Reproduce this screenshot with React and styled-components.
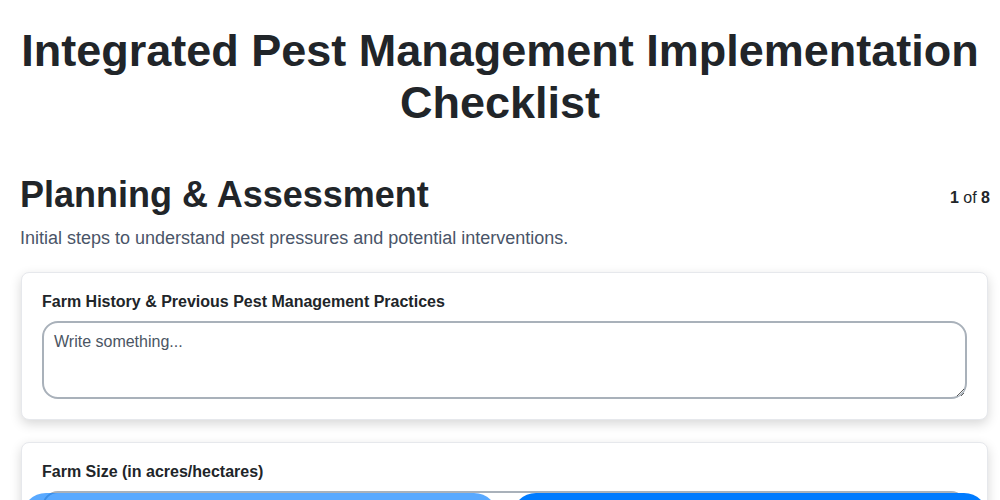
import React from 'react';
import styled, { createGlobalStyle } from 'styled-components';

const GlobalStyle = createGlobalStyle`
  html, body {
    margin: 0;
    padding: 0;
    background: #ffffff;
    font-family: "Liberation Sans", Arial, sans-serif;
    color: #212529;
  }
  * {
    box-sizing: border-box;
  }
`;

const Page = styled.div`
  padding: 0 12px 80px 20px;
`;

const Title = styled.h1`
  margin: 25px -12px 45px -20px;
  font-size: 45px;
  font-weight: 700;
  text-align: center;
  color: #212529;
`;

const SectionHead = styled.div`
  display: flex;
  align-items: center;
  justify-content: space-between;
  margin-right: -2px;
`;

const SectionTitle = styled.h2`
  margin: 0;
  font-size: 36px;
  font-weight: 700;
  color: #212529;
`;

const Counter = styled.div`
  font-size: 16px;
  color: #212529;
  padding-top: 6px;

  b {
    font-weight: 700;
  }
`;

const Description = styled.p`
  margin: 12px 0 23px;
  font-size: 18px;
  color: #4a5568;
`;

const Card = styled.div`
  background: #ffffff;
  border: 1px solid #e6e8ec;
  border-radius: 8px;
  box-shadow: 0 4px 12px rgba(0, 0, 0, 0.16);
  padding: 20px;
  margin: 0 0 22px 1px;
`;

const Label = styled.label`
  display: block;
  font-size: 16px;
  font-weight: 700;
  color: #212529;
  margin-bottom: 10px;
`;

const fieldStyles = `
  display: block;
  width: 100%;
  border: 2px solid #a9b1ba;
  border-radius: 16px;
  padding: 10px;
  font-family: "Liberation Sans", Arial, sans-serif;
  font-size: 16px;
  color: #212529;
  background: #ffffff;
  outline: none;
  &::placeholder {
    color: #4b5563;
  }
`;

const TextArea = styled.textarea`
  ${fieldStyles}
  height: 78px;
`;

const Input = styled.input`
  ${fieldStyles}
  height: 44px;
`;

const Footer = styled.div`
  position: fixed;
  left: 0;
  right: 0;
  bottom: -41px;
  display: flex;
  gap: 14px;
  padding: 0 12px 0 22px;
`;

const NavButton = styled.button`
  flex: 1;
  height: 48px;
  border: none;
  border-radius: 24px;
  background: #007bff;
  opacity: ${props => (props.disabled ? 0.65 : 1)};
  color: #ffffff;
  font-family: "Liberation Sans", Arial, sans-serif;
  font-size: 16px;
  font-weight: 700;
`;

const fields = [
  { label: 'Farm History & Previous Pest Management Practices', type: 'textarea' },
  { label: 'Farm Size (in acres/hectares)', type: 'input' },
];

export default function App() {
  return (
    <>
      <GlobalStyle />
      <Page>
        <Title>Integrated Pest Management Implementation Checklist</Title>
        <SectionHead>
          <SectionTitle>Planning &amp; Assessment</SectionTitle>
          <Counter>
            <b>1</b> of <b>8</b>
          </Counter>
        </SectionHead>
        <Description>
          Initial steps to understand pest pressures and potential interventions.
        </Description>
        {fields.map(field => (
          <Card key={field.label}>
            <Label>{field.label}</Label>
            {field.type === 'textarea' ? (
              <TextArea placeholder="Write something..." />
            ) : (
              <Input type="text" />
            )}
          </Card>
        ))}
      </Page>
      <Footer>
        <NavButton disabled>Previous</NavButton>
        <NavButton>Next</NavButton>
      </Footer>
    </>
  );
}
